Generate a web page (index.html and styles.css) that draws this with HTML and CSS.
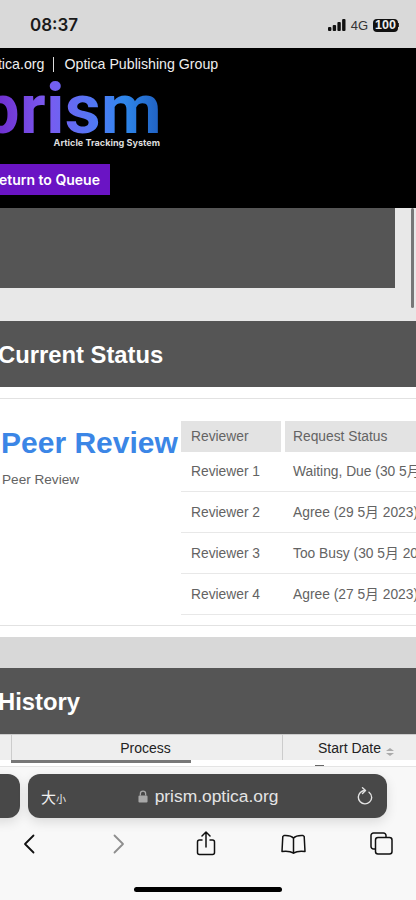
FILE: index.html
```html
<!DOCTYPE html>
<html lang="en">
<head>
  <meta charset="UTF-8" />
  <meta name="viewport" content="width=device-width, initial-scale=1.0" />
  <title>Prism</title>
  <link rel="stylesheet" href="styles.css">
</head>
<body>
  <div class="phone">
    <div class="status-bar">
      <span class="time">08:37</span>
      <div class="status-icons">
        <svg width="18" height="12" viewBox="0 0 18 12" fill="#111">
          <rect x="0" y="8" width="3.4" height="4" rx="1"/>
          <rect x="4.7" y="6" width="3.4" height="6" rx="1"/>
          <rect x="9.4" y="3" width="3.4" height="9" rx="1"/>
          <rect x="14.1" y="0" width="3.4" height="12" rx="1"/>
        </svg>
        <span class="network">4G</span>
        <span class="battery">100</span>
        <span class="battery-tip"></span>
      </div>
    </div>

    <div class="site-header">
      <div class="top-links">
        <span class="org-link">Optica.org</span>
        <span class="divider"></span>
        <span>Optica Publishing Group</span>
      </div>
      <div class="logo">
        <div class="logo-word">prism</div>
        <div class="logo-sub">Article Tracking System</div>
      </div>
      <div class="return-button">Return to Queue</div>
    </div>

    <div class="top-panel">
      <div class="dark-box"></div>
      <div class="panel-scroll"></div>
    </div>

    <div class="section-title">Current Status</div>

    <div class="status-section">
      <div class="status-left">
        <h2>Peer Review</h2>
        <p>Peer Review</p>
      </div>
      <div class="reviewers">
        <div class="rev-row rev-head">
          <div>Reviewer</div>
          <div>Request Status</div>
        </div>
        <div class="rev-row"><div>Reviewer 1</div><div>Waiting, Due (30 5月 2023)</div></div>
        <div class="rev-row"><div>Reviewer 2</div><div>Agree (29 5月 2023)</div></div>
        <div class="rev-row"><div>Reviewer 3</div><div>Too Busy (30 5月 2023)</div></div>
        <div class="rev-row"><div>Reviewer 4</div><div>Agree (27 5月 2023)</div></div>
      </div>
    </div>

    <div class="gray-gap"></div>

    <div class="section-title history-title">History</div>

    <div class="history-head">
      <div class="col-first"></div>
      <div class="col-process">Process</div>
      <div class="col-date">Start Date <span class="sort"><i class="up"></i><i class="down"></i></span></div>
    </div>
    <div class="history-scroll"><div class="scroll-thumb"></div><div class="row-mark"></div></div>

    <div class="toolbar">
      <div class="address-row">
        <div class="tab-pill"></div>
        <div class="url-pill">
          <span class="text-size">大<small>小</small></span>
          <span class="url">
            <svg width="10" height="13" viewBox="0 0 11 14"><path d="M2.600 6V4a2.900 2.900 0 0 1 5.800 0v2" fill="none" stroke="#a8a8a8" stroke-width="1.400"/><rect x="0.500" y="6" width="10" height="7.600" rx="1.200" fill="#a8a8a8"/></svg>
            prism.optica.org
          </span>
          <svg width="16" height="19" viewBox="0 0 16 19" fill="none" stroke="#e4e4e4" stroke-width="1.400" stroke-linecap="round" stroke-linejoin="round"><path d="M8 3.500A6.700 6.700 0 1 0 14.700 10.500 6.700 6.700 0 0 0 12 5.200"/><path d="M5.500 .800 8.500 3.500 5.500 6.500"/></svg>
        </div>
      </div>
      <div class="nav-row">
        <svg width="14" height="20" viewBox="0 0 14 20" fill="none" stroke="#111" stroke-width="1.800" stroke-linecap="round" stroke-linejoin="round"><path d="M11.500 1.500 3 10l8.500 8.500"/></svg>
        <svg class="nav-forward" width="14" height="20" viewBox="0 0 14 20" fill="none" stroke="#8e8e8e" stroke-width="1.800" stroke-linecap="round" stroke-linejoin="round"><path d="M2.500 1.500 11 10l-8.500 8.500"/></svg>
        <svg class="nav-share" width="20" height="25" viewBox="0 0 20 25" fill="none" stroke="#111" stroke-width="1.500" stroke-linecap="round" stroke-linejoin="round"><path d="M6 9H3.500A2 2 0 0 0 1.500 11v10.500a2 2 0 0 0 2 2h13a2 2 0 0 0 2-2V11a2 2 0 0 0-2-2H14"/><path d="M10 16V1.500M6 5l4-4 4 4"/></svg>
        <svg width="25" height="20" viewBox="0 0 25 20" fill="none" stroke="#111" stroke-width="1.500" stroke-linecap="round" stroke-linejoin="round"><path d="M12.500 4C10.500 2 7 1.200 3 1.500L1.800 2.500 1 17.500c4.500-.6 8.500-.2 11.500 1.500 3-1.700 7-2.100 11.500-1.500L23.200 2.500 22 1.500C18 1.200 14.500 2 12.500 4Z"/><path d="M12.500 4V19"/></svg>
        <svg width="23" height="23" viewBox="0 0 23 23" fill="none" stroke="#111" stroke-width="1.500" stroke-linejoin="round"><path d="M5.500 17H3.500A2.500 2.500 0 0 1 1 14.500V3.500A2.500 2.500 0 0 1 3.500 1h10A2.500 2.500 0 0 1 16 3.500V5.500"/><rect x="5.500" y="5.500" width="16.500" height="16.500" rx="2.500"/></svg>
      </div>
      <div class="home-bar"></div>
    </div>
  </div>
</body>
</html>
```

FILE: styles.css
```css
html, body {
  margin: 0;
  padding: 0;
}
body {
  font-family: "Liberation Sans", "Noto Sans CJK SC", Arial, sans-serif;
  color: #636363;
  background: #fff;
}
.phone {
  width: 416px;
  height: 900px;
  overflow: hidden;
}

/* status bar */
.status-bar {
  height: 48px;
  background: #d9d9d9;
  display: flex;
  align-items: center;
  justify-content: space-between;
  padding: 2px 17px 0 30px;
  box-sizing: border-box;
}
.time {
  font-family: Inter, sans-serif;
  font-weight: 600;
  font-size: 17px;
  color: #1a1a1a;
}
.status-icons {
  display: flex;
  align-items: center;
}
.network {
  font-size: 13px;
  color: #333;
  margin: 0 5px;
}
.battery {
  background: #111;
  color: #eee;
  font-weight: 700;
  font-size: 12.5px;
  line-height: 13px;
  width: 25px;
  text-align: center;
  border-radius: 4px;
}
.battery-tip {
  width: 1px;
  height: 4px;
  background: #333;
}

/* black header, scrolled sideways so its left edge is cut */
.site-header {
  height: 160px;
  background: #000;
  color: #fff;
  overflow: hidden;
}
.top-links {
  display: flex;
  align-items: center;
  font-size: 14.2px;
  height: 16px;
  margin: 8px 0 0 -21px;
  color: #eee;
  white-space: nowrap;
}
.divider {
  width: 1px;
  height: 15px;
  background: #ddd;
  margin: 0 10px 0 9px;
}
.logo {
  margin-left: -24px;
  width: 184px;
  text-align: right;
}
.logo-word {
  font-family: Roboto, sans-serif;
  font-weight: 700;
  font-size: 70px;
  line-height: 62px;
  letter-spacing: 0.3px;
  margin-top: 6px;
  padding-right: 0;
  margin-right: -2px;
  background: linear-gradient(90deg, #6a1cc0 0%, #7a5af0 38%, #4a7df5 68%, #2e86ea 80%, #1f5fc0 100%);
  -webkit-background-clip: text;
  background-clip: text;
  color: transparent;
}
.logo-sub {
  font-family: Inter, sans-serif;
  font-weight: 700;
  font-size: 9.1px;
  line-height: 12px;
  color: #ddd;
  margin-top: -3px;
}
.return-button {
  background: #6a14c4;
  font-family: Inter, sans-serif;
  font-weight: 600;
  font-size: 14px;
  line-height: 31px;
  width: 120px;
  margin-top: 15px;
  margin-left: -22px;
  padding-left: 12px;
  white-space: nowrap;
}

/* panel under the header */
.top-panel {
  height: 113px;
  background: #e8e8e8;
  display: flex;
  align-items: flex-start;
}
.dark-box {
  width: 395px;
  height: 80px;
  background: #555;
}
.panel-scroll {
  width: 3px;
  height: 100px;
  background: #777;
  margin-left: 16px;
  border-radius: 2px;
}

.section-title {
  height: 66px;
  background: #555;
  color: #fff;
  font-weight: 700;
  font-size: 23.8px;
  line-height: 68px;
  text-indent: -2px;
}

.status-section {
  margin-top: 11px;
  height: 228px;
  box-sizing: border-box;
  border-top: 1px solid #e2e2e2;
  border-bottom: 1px solid #e2e2e2;
  display: flex;
  padding-top: 22px;
}
.status-left {
  width: 181px;
  flex: none;
  padding-left: 2px;
  box-sizing: border-box;
}
.status-left h2 {
  margin: 0;
  color: #3b86e6;
  font-size: 30px;
  line-height: 44px;
  white-space: nowrap;
  font-weight: 700;
  margin-left: -1px;
}
.status-left p {
  margin: 7px 0 0;
  font-size: 13.6px;
}

.reviewers {
  width: 235px;
  flex: none;
  overflow: hidden;
}
.rev-row {
  display: grid;
  grid-template-columns: 100px 200px;
  column-gap: 4px;
  height: 41px;
  border-bottom: 1px solid #e8e8e8;
  box-sizing: border-box;
  font-size: 13.8px;
  line-height: 42px;
  white-space: nowrap;
  width: 304px;
}
.rev-row div {
  padding-left: 10px;
  box-sizing: border-box;
}
.rev-row div + div {
  padding-left: 8px;
}
.rev-head {
  height: 30px;
  line-height: 31px;
  border-bottom: 0;
}
.rev-head div {
  background: #e3e3e3;
}

.gray-gap {
  margin-top: 11px;
  height: 31px;
  background: #d8d8d8;
}

/* history table, only its header is on screen */
.history-head {
  display: flex;
  height: 26px;
  background: #eee;
  color: #222;
  font-size: 14px;
  line-height: 27px;
  border-top: 1px solid #ccc;
  box-sizing: border-box;
}
.col-first {
  width: 11px;
  border-right: 1px solid #ccc;
}
.col-process {
  width: 271px;
  padding-right: 3px;
  text-align: center;
  border-right: 1px solid #ccc;
  box-sizing: border-box;
}
.col-date {
  padding-left: 35px;
  white-space: nowrap;
}
.sort {
  display: inline-flex;
  flex-direction: column;
  gap: 2px;
  vertical-align: 2px;
  margin-left: 1px;
}
.sort i {
  display: block;
  width: 0;
  height: 0;
  border-left: 4px solid transparent;
  border-right: 4px solid transparent;
}
.sort .up {
  border-bottom: 3px solid #aaa;
}
.sort .down {
  border-top: 3px solid #aaa;
}
.history-scroll {
  height: 6px;
  background: #fff;
  position: relative;
}
.scroll-thumb {
  margin-left: 11px;
  width: 180px;
  height: 3px;
  background: #777;
}
.row-mark {
  position: absolute;
  left: 315px;
  bottom: 0;
  width: 9px;
  height: 1px;
  background: #666;
}

/* safari toolbar */
.toolbar {
  height: 134px;
  background: #f8f8f8;
  border-top: 1px solid #e4e4e4;
  box-sizing: border-box;
  padding-top: 7px;
}
.address-row {
  display: flex;
  gap: 8px;
  margin-left: -30px;
  height: 44px;
}
.tab-pill {
  width: 50px;
  background: #484848;
  border-radius: 0 12px 12px 0;
  box-shadow: 0 4px 12px rgba(0, 0, 0, 0.12);
}
.url-pill {
  width: 359px;
  background: #484848;
  border-radius: 12px;
  box-shadow: 0 4px 12px rgba(0, 0, 0, 0.12);
  display: flex;
  align-items: center;
  justify-content: space-between;
  padding: 0 14px 0 13px;
  box-sizing: border-box;
  color: #e4e4e4;
}
.text-size {
  font-family: "Noto Sans CJK SC", sans-serif;
  font-size: 15px;
  color: #f0f0f0;
  width: 25px;
  white-space: nowrap;
}
.text-size small {
  font-size: 10px;
}
.url {
  display: flex;
  align-items: center;
  gap: 7px;
  font-size: 17.400px;
  margin-right: 7px;
}
.nav-row {
  display: grid;
  grid-template-columns: repeat(5, 88px);
  justify-items: center;
  align-items: center;
  height: 25px;
  margin: 13px 0 0 -15px;
}
.nav-forward {
  margin-left: 4px;
}
.nav-share {
  margin-left: 2px;
}
.home-bar {
  width: 148px;
  height: 5px;
  background: #000;
  border-radius: 3px;
  margin: 31px auto 0;
}
```
